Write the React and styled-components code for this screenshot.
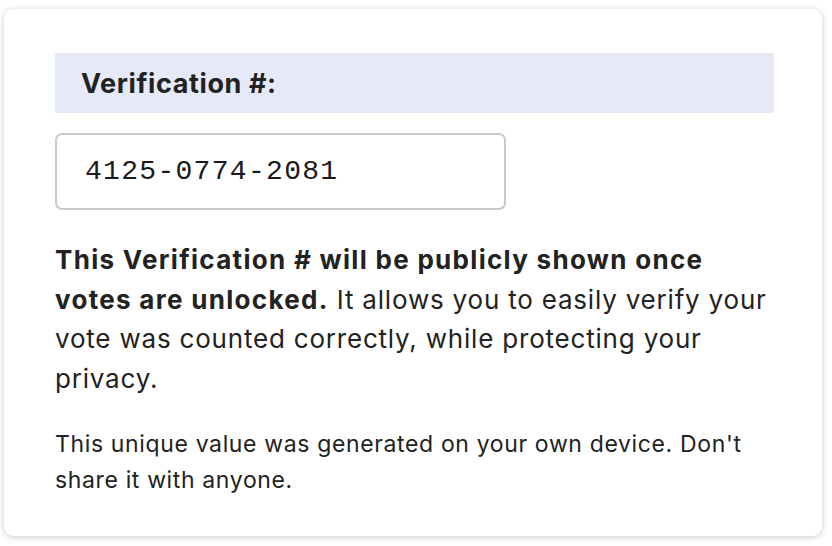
import React from 'react'
import styled, { createGlobalStyle } from 'styled-components'

const GlobalStyle = createGlobalStyle`
  html, body {
    margin: 0;
    padding: 0;
    background: #ffffff;
    font-family: Inter, "Noto Sans", "Liberation Sans", sans-serif;
    color: #222222;
  }
`

const Page = styled.div`
  padding: 9px 10px 12px 4px;
`

const Card = styled.div`
  width: 818px;
  box-sizing: border-box;
  background: #fff;
  border-radius: 9px;
  box-shadow: 0 1px 6px rgba(0, 0, 0, 0.22);
  padding: 44px 48px 38px 51px;
`

const Heading = styled.div`
  background: #e6e9f7;
  height: 60px;
  display: flex;
  align-items: center;
  padding-left: 26px;
  font-size: 27px;
  letter-spacing: 0.6px;
  font-weight: 700;
  color: #222;
`

const CodeBox = styled.div`
  margin-top: 20px;
  width: 451px;
  height: 77px;
  box-sizing: border-box;
  border: 2px solid #c9c9c9;
  border-radius: 7px;
  display: flex;
  align-items: center;
  padding-left: 28px;
  font-family: "Liberation Mono", "DejaVu Sans Mono", monospace;
  font-size: 28px;
  letter-spacing: 1.3px;
  color: #1a1a1a;
`

const Text = styled.p`
  margin: ${p => p.$top}px 0 0;
  font-size: ${p => p.$size}px;
  line-height: ${p => p.$line}px;
  letter-spacing: ${p => p.$spacing}px;
  color: #222;

  b {
    font-weight: 700;
    letter-spacing: 1.3px;
  }
`

const App = () => {
  return (
    <Page>
      <GlobalStyle />
      <Card>
        <Heading>Verification #:</Heading>
        <CodeBox>4125-0774-2081</CodeBox>
        <Text $top={30} $size={26} $line={39.5} $spacing={0.8}>
          <b>This Verification # will be publicly shown once votes are unlocked.</b>{' '}
          It allows you to easily verify your vote was counted correctly, while protecting your privacy.
        </Text>
        <Text $top={28} $size={23} $line={36} $spacing={0.64}>
          This unique value was generated on your own device. Don't share it with anyone.
        </Text>
      </Card>
    </Page>
  )
}

export default App
